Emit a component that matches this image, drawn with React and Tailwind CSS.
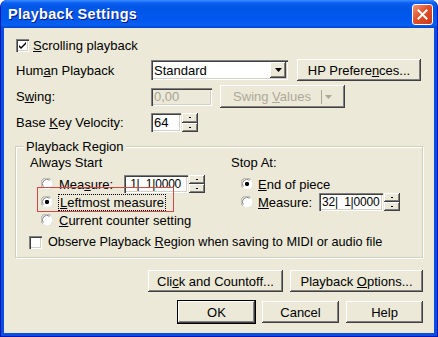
import React from 'react';

const raised =
  'shadow-[inset_-1px_-1px_#404040,inset_1px_1px_#ffffff,inset_-2px_-2px_#808080,inset_2px_2px_#ece9d8]';
const sunken =
  'shadow-[inset_1px_1px_#808080,inset_2px_2px_#404040,inset_-1px_-1px_#ffffff,inset_-2px_-2px_#d4d0c8]';

const U = ({ children }) => <span className="underline underline-offset-[1px]">{children}</span>;

const Checkbox = ({ checked }) => (
  <div className={`w-[13px] h-[13px] bg-white shrink-0 flex items-center justify-center ${sunken}`}>
    {checked && (
      <svg width="7" height="7" viewBox="0 0 7 7">
        <path d="M0 3l2 2 5-5v2l-5 5-2-2z" fill="#000" />
      </svg>
    )}
  </div>
);

const Radio = ({ checked }) => (
  <svg width="12" height="12" viewBox="0 0 12 12" className="shrink-0">
    <circle cx="6" cy="6" r="5.5" fill="#fff" />
    <path d="M1.5 9.5A5.5 5.5 0 0 1 9.5 1.5" stroke="#a0a0a0" fill="none" />
    <path d="M2.3 8.6A4.5 4.5 0 0 1 8.6 2.3" stroke="#606060" fill="none" strokeWidth="0.8" />
    <path d="M10.5 2.5A5.5 5.5 0 0 1 2.5 10.5" stroke="#e6e3d3" fill="none" />
    {checked && <rect x="4" y="4" width="4" height="4" rx="1.4" fill="#000" />}
  </svg>
);

const Spin = () => (
  <div className="w-[16px] h-full flex flex-col ml-[1px]">
    <div className={`flex-1 bg-[#ece9d8] flex items-center justify-center ${raised}`}>
      <div className="w-[2px] h-[1px] bg-black" />
    </div>
    <div className={`flex-1 bg-[#ece9d8] flex items-center justify-center ${raised}`}>
      <div className="w-[2px] h-[1px] bg-black" />
    </div>
  </div>
);

const Button = ({ children, w, def }) => (
  <div
    className={`h-[22px] ${w} bg-[#ece9d8] flex items-center justify-center ${raised} ${
      def ? 'outline outline-1 outline-black' : ''
    }`}
  >
    <span className="whitespace-pre">{children}</span>
  </div>
);

const Edit = ({ value, w }) => (
  <div className={`h-[18px] ${w} bg-white flex items-center pl-[3px] ${sunken}`}>
    <span className="whitespace-pre text-[12px] tracking-[-0.2px]">{value}</span>
  </div>
);

export default function App() {
  return (
    <div className="w-[438px] h-[337px] bg-white font-['Liberation_Sans',Arial,sans-serif] text-[13px] text-black leading-none select-none">
      <div className="w-full h-full rounded-t-[7px] bg-[#0a4de0] flex flex-col overflow-hidden border-l border-r border-b border-[#0019b5]">
        {/* title bar */}
        <div className="h-[28px] shrink-0 flex items-center justify-between pl-[7px] pr-[4px] bg-[linear-gradient(to_bottom,#3d8eff_0px,#0a5ff2_3px,#0056e6_7px,#0058ee_20px,#0860ee_25px,#0045d0_28px)]">
          <span className="text-white font-bold text-[14.5px] tracking-[0.3px] [text-shadow:1px_1px_#0a1883]">
            Playback Settings
          </span>
          <div className="w-[21px] h-[21px] mt-[1px] rounded-[3px] border border-white bg-[linear-gradient(135deg,#f2977a_0%,#e2512b_45%,#c8391a_100%)] flex items-center justify-center">
            <svg width="11" height="11" viewBox="0 0 11 11">
              <path d="M1.5 1.5l8 8M9.5 1.5l-8 8" stroke="#fff" strokeWidth="2" strokeLinecap="square" />
            </svg>
          </div>
        </div>

        {/* client area */}
        <div className="flex-1 mx-[3px] mb-[3px] bg-[#ece9d8] pl-[12px] pr-[11px] pt-[11px] flex flex-col">
          {/* scrolling playback */}
          <div className="h-[13px] flex items-center gap-[4px]">
            <Checkbox checked />
            <span>
              <U>S</U>crolling playback
            </span>
          </div>

          {/* human playback */}
          <div className="h-[22px] mt-[7px] flex items-center">
            <span className="w-[135px]">
              Hum<U>a</U>n Playback
            </span>
            <div className={`h-[20px] w-[137px] bg-white flex items-center justify-between pl-[3px] pr-[2px] ${sunken}`}>
              <span>Standard</span>
              <div className={`w-[16px] h-[16px] bg-[#ece9d8] flex items-center justify-center ${raised}`}>
                <svg width="7" height="4" viewBox="0 0 7 4">
                  <path d="M0 0h7L3.5 4z" fill="#000" />
                </svg>
              </div>
            </div>
            <div className="ml-[9px]">
              <Button w="w-[124px]">
                HP Prefere<U>n</U>ces...
              </Button>
            </div>
          </div>

          {/* swing */}
          <div className="h-[23px] mt-[4px] flex items-center">
            <span className="w-[135px]">
              S<U>w</U>ing:
            </span>
            <div className={`h-[18px] w-[61px] flex items-center pl-[3px] text-[#a7a493] ${sunken}`}>0,00</div>
            <div className="ml-[8px]">
              <div className={`h-[23px] w-[125px] bg-[#ece9d8] flex items-center justify-center ${raised}`}>
                <span className="text-[#aca899] flex items-center">
                  <span className="whitespace-pre">
                    Swing <U>V</U>alues
                  </span>
                  <span className="w-[1px] h-[14px] bg-[#aca899] ml-[10px] mr-[3px]" />
                  <svg width="7" height="4" viewBox="0 0 7 4">
                    <path d="M0 0h7L3.5 4z" fill="#aca899" />
                  </svg>
                </span>
              </div>
            </div>
          </div>

          {/* velocity */}
          <div className="h-[19px] mt-[5px] flex items-center">
            <span className="w-[135px]">
              Base <U>K</U>ey Velocity:
            </span>
            <div className="h-[19px] flex">
              <div className={`h-[19px] w-[30px] bg-white flex items-center pl-[3px] ${sunken}`}>64</div>
              <Spin />
            </div>
          </div>

          {/* playback region group */}
          <div className="relative mt-[14px] -ml-[1px] w-[408px] h-[112px] border border-[#d0d0bf] shadow-[inset_1px_1px_#ffffff,1px_1px_#ffffff] pl-[13px] pt-[8px]">
            <span className="absolute -top-[7px] left-[8px] px-[2px] bg-[#ece9d8]">Playback Region</span>
            <div className="absolute left-[21px] top-[40px] w-[137px] h-[25px] border border-[#d04848]" />

            <div className="flex">
              <div className="w-[202px] flex flex-col">
                <span className="h-[14px] pl-[1px] flex items-center">Always Start</span>
                <div className="ml-[12px] mt-[6px] flex flex-col">
                  <div className="h-[18px] flex items-center">
                    <Radio />
                    <span className="ml-[6px] w-[65px]">
                      Mea<U>s</U>ure:
                    </span>
                    <div className="h-[18px] flex">
                      <Edit w="w-[64px]" value={' 1|  1|0000'} />
                      <Spin />
                    </div>
                  </div>
                  <div className="h-[18px] flex items-center">
                    <Radio checked />
                    <span className="ml-[5px] px-[1px] py-[1px] border border-dotted border-black">
                      <U>L</U>eftmost measure
                    </span>
                  </div>
                  <div className="h-[18px] flex items-center">
                    <Radio />
                    <span className="ml-[6px]">
                      <U>C</U>urrent counter setting
                    </span>
                  </div>
                </div>
              </div>
              <div className="flex flex-col">
                <span className="h-[14px] flex items-center">Stop At:</span>
                <div className="ml-[10px] mt-[6px] flex flex-col">
                  <div className="h-[18px] flex items-center">
                    <Radio checked />
                    <span className="ml-[5px]">
                      <U>E</U>nd of piece
                    </span>
                  </div>
                  <div className="h-[18px] flex items-center">
                    <Radio />
                    <span className="ml-[5px] w-[61px]">
                      <U>M</U>easure:
                    </span>
                    <div className="h-[18px] flex">
                      <Edit w="w-[64px]" value={'32|  1|0000'} />
                      <Spin />
                    </div>
                  </div>
                </div>
              </div>
            </div>

            <div className="mt-[7px] h-[13px] flex items-center gap-[6px]">
              <Checkbox />
              <span className="text-[12.7px]">
                Observe Playback <U>R</U>egion when saving to MIDI or audio file
              </span>
            </div>
          </div>

          {/* bottom buttons */}
          <div className="mt-[12px] flex justify-end gap-[7px]">
            <Button w="w-[135px]">
              Cli<U>c</U>k and Countoff...
            </Button>
            <Button w="w-[133px]">
              Playback <U>O</U>ptions...
            </Button>
          </div>
          <div className="mt-[9px] flex justify-end gap-[7px]">
            <Button w="w-[77px]" def>
              OK
            </Button>
            <Button w="w-[77px]">Cancel</Button>
            <Button w="w-[77px]">Help</Button>
          </div>
        </div>
      </div>
    </div>
  );
}
